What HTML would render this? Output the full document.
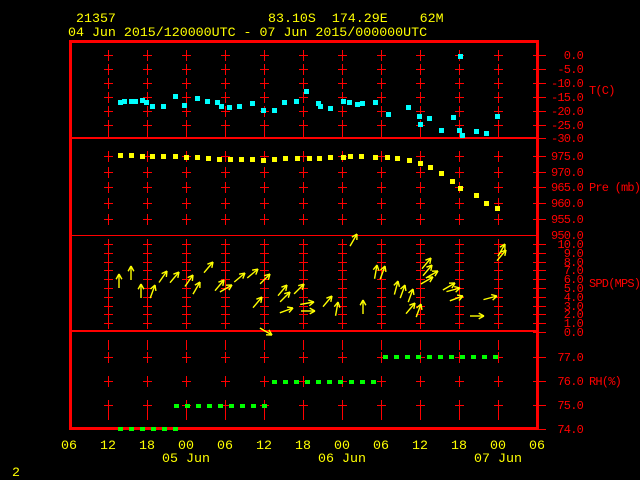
<!DOCTYPE html>
<html><head><meta charset="utf-8"><style>
html,body{margin:0;padding:0;background:#000;width:640px;height:480px;overflow:hidden}
svg{display:block}
text{font-family:"Liberation Mono",monospace;font-size:13.3px}
text.r{font-size:12px;letter-spacing:-0.8px}
</style></head><body>
<svg id="s" width="640" height="480" xmlns="http://www.w3.org/2000/svg">
<text x="76" y="22" fill="#ff0">21357</text>
<text x="268" y="22" fill="#ff0" xml:space="preserve">83.10S  174.29E    62M</text>
<text x="68" y="36" fill="#ff0">04 Jun 2015/120000UTC - 07 Jun 2015/000000UTC</text>
<text x="12" y="476" fill="#ff0">2</text>
<g id="g"></g>
</svg>
<script>
var g=document.getElementById('g'),h='';
function L(x1,y1,x2,y2,c,w){h+='<line x1="'+x1+'" y1="'+y1+'" x2="'+x2+'" y2="'+y2+'" stroke="'+c+'" stroke-width="'+(w||1)+'"/>';}
function R(x,y,w,hh,c){h+='<rect x="'+x+'" y="'+y+'" width="'+w+'" height="'+hh+'" fill="'+c+'"/>';}
function T(x,y,s,c,a,cl){h+='<text x="'+x+'" y="'+y+'" fill="'+c+'"'+(a?' text-anchor="'+a+'"':'')+(cl?' class="'+cl+'"':'')+'>'+s+'</text>';}
var red='#f00';
var tT=[55,69,83,97,111,125],tP=[156,172,187,203,219],tS=[],tR=[357,381,405];
for(var i=10;i>=0;i--)tS.push(Math.round(332-i*8.8));
var all=tT.concat(tP).concat(tS.slice(0,10)).concat(tR);
for(var k=0;k<11;k++){var x=108+39*k;
 all.forEach(function(y){R(x,y-5,1,11,red);R(x-4,y,9,1,red);});
 R(x,125,1,13,red);R(x,340,1,10,red);R(x,410,1,10,red);
}
R(70,137,468,2,red);R(70,235,468,1,red);R(70,330,468,2,red);
R(69,40,470,3,red);R(69,40,3,390,red);R(536,40,3,390,red);R(69,427,470,3,red);
function rt(y,s){R(533,y,13,1,red);T(583,y+4,s,red,'end','r');}
var tl=['0.0','-5.0','-10.0','-15.0','-20.0','-25.0'];tT.forEach(function(y,i){rt(y,tl[i]);});rt(138,'-30.0');
var pl=['975.0','970.0','965.0','960.0','955.0'];tP.forEach(function(y,i){rt(y,pl[i]);});
T(583,239,'950.0',red,'end','r');
tS.forEach(function(y,i){R(533,y,13,1,red);T(583,y+4,(10-i)+'.0',red,'end','r');});
var rl=['77.0','76.0','75.0'];tR.forEach(function(y,i){rt(y,rl[i]);});rt(429,'74.0');
T(589,94,'T(C)',red,'','r');T(589,191,'Pre (mb)',red,'','r');T(589,287,'SPD(MPS)',red,'','r');T(589,385,'RH(%)',red,'','r');
var hl=['06','12','18','00','06','12','18','00','06','12','18','00','06'];
hl.forEach(function(s,i){T(69+39*i,449,s,'#ff0','middle');});
T(186,462,'05 Jun','#ff0','middle');T(342,462,'06 Jun','#ff0','middle');T(498,462,'07 Jun','#ff0','middle');
var cy=[[120,102],[124,101],[131,101],[135,101],[142,100],[146,102],[152,106],[163,106],[175,96],[184,105],[197,98],[207,101],[217,102],[221,106],[229,107],[239,106],[252,103],[263,110],[274,110],[284,102],[296,101],[306,91],[318,103],[320,106],[330,108],[343,101],[349,102],[357,104],[362,103],[375,102],[388,114],[408,107],[419,116],[420,124],[429,118],[441,130],[453,117],[460,56],[459,130],[462,135],[476,131],[486,133],[497,116]];
cy.forEach(function(p){R(p[0]-2,p[1]-2,5,5,'#0ff');});
var py=[[120,155],[131,155],[142,156],[152,156],[163,156],[175,156],[186,157],[197,157],[208,158],[219,159],[230,159],[241,159],[252,159],[263,160],[274,159],[285,158],[297,158],[309,158],[319,158],[330,157],[343,157],[350,156],[361,156],[375,157],[387,157],[397,158],[409,160],[420,163],[430,167],[441,173],[452,181],[460,188],[476,195],[486,203],[497,208]];
py.forEach(function(p){R(p[0]-2,p[1]-2,5,5,'#ff0');});
var ar=[[119,274,0],[131,266,0],[141,284,0],[155,285,20],[167,271,35],[179,272,40],[193,275,35],[213,262,40],[200,282,30],[224,280,40],[232,285,60],[245,273,50],[258,269,50],[272,335,120],[287,285,40],[290,292,45],[293,308,70],[304,284,45],[315,311,90],[314,302,80],[338,302,10],[332,296,40],[357,234,30],[363,300,0],[377,265,10],[385,266,20],[398,281,15],[405,285,20],[413,289,20],[421,304,20],[431,258,40],[432,265,40],[433,277,60],[438,271,60],[455,283,60],[460,288,75],[463,296,70],[484,316,90],[497,296,75],[505,244,30],[506,250,40],[415,303,40],[262,297,40],[270,274,45]];
ar.forEach(function(a){var r=a[2]*Math.PI/180,dx=Math.sin(r),dy=-Math.cos(r),l=14;
 var tx=a[0]-dx*l,ty=a[1]-dy*l;L(tx,ty,a[0],a[1],'#ff0',1.4);
 var r1=r+Math.PI-0.5,r2=r+Math.PI+0.5;
 L(a[0],a[1],a[0]+Math.sin(r1)*6,a[1]-Math.cos(r1)*6,'#ff0',1.4);
 L(a[0],a[1],a[0]+Math.sin(r2)*6,a[1]-Math.cos(r2)*6,'#ff0',1.4);});
function gr(x1,x2,y){for(var x=x1;x<=x2;x+=11)R(x-2,y-2,5,4,'#0f0');}
gr(120,176,429);gr(176,265,406);gr(274,376,382);gr(385,497,357);
g.innerHTML=h;
</script>
</body></html>
